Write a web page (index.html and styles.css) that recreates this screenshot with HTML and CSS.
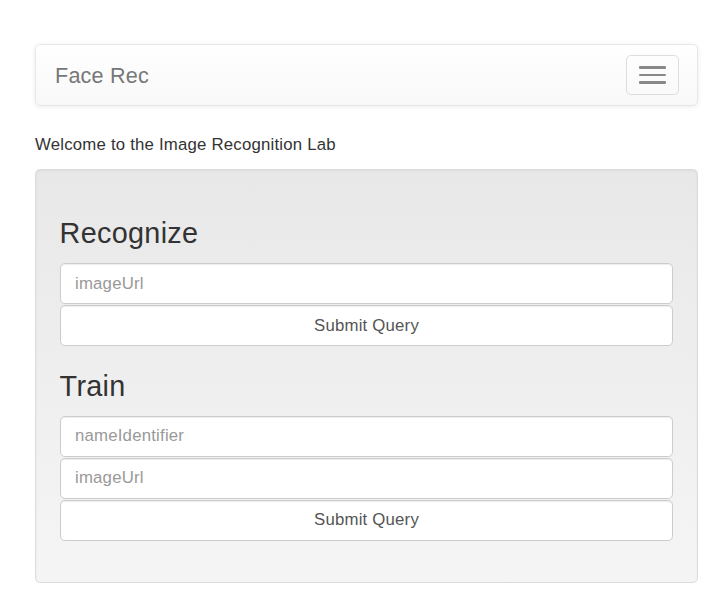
FILE: index.html
```html
<!DOCTYPE html>
<html lang="en">
<head>
<meta charset="utf-8">
<title>Face Rec</title>
<link rel="stylesheet" href="styles.css">
</head>
<body>
<div class="container">
  <nav class="navbar">
    <span class="brand">Face Rec</span>
    <button class="toggle" type="button" aria-label="Toggle navigation">
      <span class="bar"></span>
      <span class="bar"></span>
      <span class="bar"></span>
    </button>
  </nav>
  <p class="welcome">Welcome to the Image Recognition Lab</p>
  <div class="well">
    <form class="form">
      <h3 class="title">Recognize</h3>
      <input class="field" type="text" placeholder="imageUrl">
      <button class="field submit" type="button">Submit Query</button>
    </form>
    <form class="form">
      <h3 class="title">Train</h3>
      <input class="field" type="text" placeholder="nameIdentifier">
      <input class="field" type="text" placeholder="imageUrl">
      <button class="field submit" type="button">Submit Query</button>
    </form>
  </div>
</div>
</body>
</html>
```

FILE: styles.css
```css
* { box-sizing: border-box; }

html, body {
  margin: 0;
  padding: 0;
  background: #fff;
}

body {
  font-family: "Liberation Sans", Arial, sans-serif;
  font-size: 16.8px;
  line-height: 1.428571;
  color: #333;
  letter-spacing: 0.2px;
}

.container {
  padding: 44px 11px 0 35px;
}

.navbar {
  height: 62px;
  border: 1px solid #e7e7e7;
  border-radius: 4.8px;
  background: linear-gradient(to bottom, #ffffff 0%, #f8f8f8 100%);
  box-shadow: inset 0 1px 0 rgba(255,255,255,.15), 0 1px 5px rgba(0,0,0,.075);
  display: flex;
  align-items: flex-start;
  justify-content: space-between;
  margin-bottom: 27px;
}

.brand {
  padding: 18.5px 18px 17.5px 19px;
  font-size: 21.6px;
  line-height: 24px;
  color: #777;
}

.toggle {
  margin: 9.6px 18px 0 0;
  width: 52.8px;
  height: 40.8px;
  padding: 10.8px 12px;
  border: 1px solid #ddd;
  border-radius: 4.8px;
  background: transparent;
  display: flex;
  flex-direction: column;
  justify-content: space-between;
  align-items: stretch;
}

.bar {
  display: block;
  height: 2.4px;
  background: #888;
  border-radius: 1px;
}

.welcome {
  margin: 0 0 12.4px;
}

.well {
  border: 1px solid #dcdcdc;
  border-radius: 4.8px;
  background: linear-gradient(to bottom, #e8e8e8 0%, #f5f5f5 100%);
  box-shadow: inset 0 1px 3px rgba(0,0,0,.05), 0 1px 0 rgba(255,255,255,.1);
  padding: 22.8px 23.6px 41.5px;
}

.form {
  display: flex;
  flex-direction: column;
  gap: 1.2px;
  margin: 0;
}

.title {
  margin: 25px 0 12.2px;
  font-size: 28.8px;
  line-height: 1.1;
  font-weight: 500;
  color: #333;
  letter-spacing: 0.3px;
}

.field {
  display: block;
  width: 100%;
  height: 40.8px;
  padding: 7.2px 14.4px;
  font-family: inherit;
  font-size: 16.8px;
  line-height: 1.428571;
  letter-spacing: 0.2px;
  color: #555;
  background: #fff;
  border: 1px solid #ccc;
  border-radius: 4.8px;
  box-shadow: inset 0 1px 1px rgba(0,0,0,.075);
  margin: 0;
}

.field::placeholder {
  color: #999;
}

.submit {
  text-align: center;
  cursor: pointer;
}
```
